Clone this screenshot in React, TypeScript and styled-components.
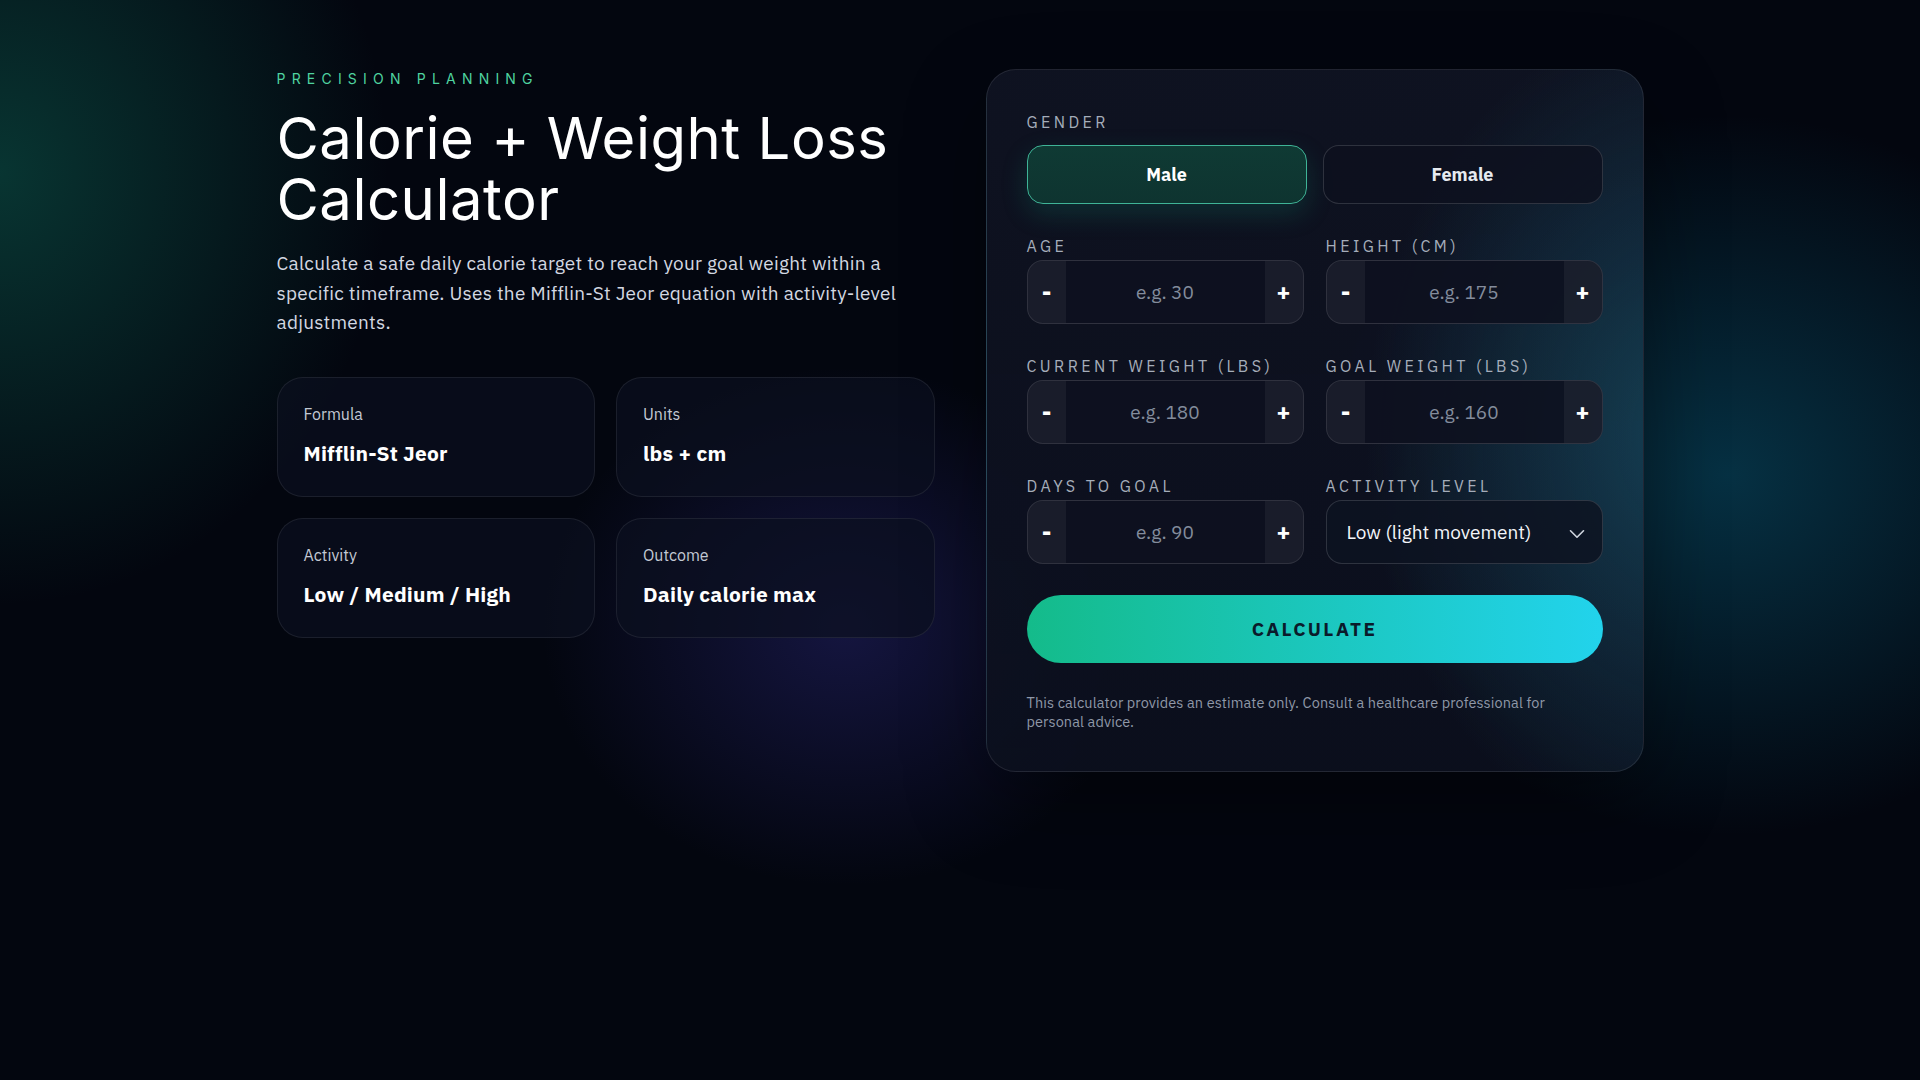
import React from 'react';
import styled, { createGlobalStyle } from 'styled-components';
import { ChevronDown } from 'lucide-react';

const GlobalStyle = createGlobalStyle`
  * { box-sizing: border-box; }
  html, body {
    margin: 0;
    min-height: 100%;
  }
  body {
    min-height: 1080px;
    font-family: 'IBM Plex Sans', Roboto, 'Noto Sans', sans-serif;
    color: #f3f5f9;
    background:
      radial-gradient(ellipse 540px 600px at 0% 16%, rgba(14, 110, 92, 0.45), rgba(14, 110, 92, 0) 72%),
      radial-gradient(ellipse 420px 360px at 44% 58%, rgba(52, 48, 150, 0.36), rgba(52, 48, 150, 0) 72%),
      radial-gradient(ellipse 560px 500px at 90% 44%, rgba(8, 84, 110, 0.55), rgba(8, 84, 110, 0) 72%),
      #03060f;
  }
`;

const Page = styled.main`
  display: grid;
  grid-template-columns: 658px 658px;
  gap: 51px;
  justify-content: center;
  align-items: start;
  padding-top: 69px;
`;

const Intro = styled.section`
  display: flex;
  flex-direction: column;
`;

const Eyebrow = styled.div`
  font-family: Inter, sans-serif;
  font-size: 14px;
  line-height: 18px;
  letter-spacing: 6.2px;
  color: #4fd3a0;
  margin-top: 1px;
  margin-bottom: 20px;
`;

const Title = styled.h1`
  font-family: Inter, sans-serif;
  font-weight: 400;
  font-size: 58px;
  line-height: 61px;
  letter-spacing: 0.5px;
  margin: 0 0 19px;
  color: #ffffff;
`;

const Lead = styled.p`
  font-size: 19px;
  line-height: 29.5px;
  letter-spacing: 0.25px;
  color: #d3d8e2;
  margin: 0 0 39px;
  max-width: 645px;
`;

const Facts = styled.div`
  display: grid;
  grid-template-columns: 1fr 1fr;
  gap: 21px;
`;

const FactCard = styled.div`
  height: 120px;
  padding: 26px 26px;
  border-radius: 26px;
  border: 1px solid rgba(255, 255, 255, 0.08);
  background: rgba(12, 16, 32, 0.7);
`;

const FactLabel = styled.div`
  font-size: 16px;
  line-height: 20px;
  color: #c3c9d4;
  margin-bottom: 16px;
`;

const FactValue = styled.div`
  font-size: 21px;
  line-height: 26px;
  font-weight: 700;
  letter-spacing: 0.2px;
  color: #ffffff;
`;

const Panel = styled.section`
  display: flex;
  flex-direction: column;
  padding: 43px 40px 40px;
  border-radius: 30px;
  border: 1px solid rgba(255, 255, 255, 0.09);
  background:
    radial-gradient(ellipse 440px 560px at 108% 52%, rgba(26, 92, 116, 0.62), rgba(26, 92, 116, 0) 75%),
    linear-gradient(180deg, rgba(15, 19, 34, 0.96), rgba(12, 16, 30, 0.9));
  box-shadow: 0 30px 80px rgba(0, 0, 0, 0.35);
`;

const Section = styled.div`
  margin-bottom: 33px;
`;

const FieldLabel = styled.div<{ $gap?: number }>`
  font-size: 16px;
  line-height: 18px;
  letter-spacing: 3.4px;
  text-transform: uppercase;
  color: #a5adba;
  margin-bottom: ${(p) => p.$gap ?? 5}px;
`;

const GenderRow = styled.div`
  display: grid;
  grid-template-columns: 1fr 1fr;
  gap: 16px;
`;

const GenderButton = styled.button<{ $active?: boolean }>`
  height: 59px;
  border-radius: 16px;
  font-family: inherit;
  font-size: 18px;
  font-weight: 700;
  color: ${(p) => (p.$active ? '#ffffff' : '#e6eaf0')};
  border: 1px solid ${(p) => (p.$active ? '#3fb497' : 'rgba(255, 255, 255, 0.14)')};
  background: ${(p) => (p.$active ? 'linear-gradient(180deg, #0f3a34, #0e3430)' : 'rgba(13, 17, 31, 0.85)')};
  box-shadow: ${(p) => (p.$active ? '0 10px 26px rgba(18, 150, 120, 0.22)' : 'none')};
  cursor: pointer;
`;

const FieldGrid = styled.div`
  display: grid;
  grid-template-columns: 1fr 1fr;
  column-gap: 22px;
  row-gap: 33px;
  margin-bottom: 31px;
`;

const Stepper = styled.div`
  display: grid;
  grid-template-columns: 38px 1fr 38px;
  height: 64px;
  border-radius: 16px;
  border: 1px solid rgba(255, 255, 255, 0.14);
  background: rgba(13, 17, 31, 0.9);
  overflow: hidden;
`;

const StepButton = styled.button`
  border: 0;
  padding: 0;
  background: rgba(255, 255, 255, 0.05);
  color: #ffffff;
  font-family: inherit;
  font-size: 24px;
  font-weight: 700;
  cursor: pointer;
`;

const NumberInput = styled.input`
  width: 100%;
  min-width: 0;
  border: 0;
  outline: none;
  background: transparent;
  text-align: center;
  font-family: inherit;
  font-size: 19px;
  color: #ffffff;
  &::placeholder {
    color: #838c9c;
  }
`;

const SelectBox = styled.button`
  display: flex;
  align-items: center;
  justify-content: space-between;
  width: 100%;
  height: 64px;
  padding: 0 12px 0 20px;
  border-radius: 16px;
  border: 1px solid rgba(255, 255, 255, 0.14);
  background: rgba(13, 19, 33, 0.85);
  color: #f4f6fa;
  font-family: inherit;
  font-size: 19px;
  cursor: pointer;
  svg {
    margin-top: 4px;
    color: #cfd5de;
  }
`;

const CalcButton = styled.button`
  height: 68px;
  border: 0;
  border-radius: 34px;
  background: linear-gradient(90deg, #14bb8a 0%, #1cc8c2 55%, #22d3ec 100%);
  color: #0a1b2b;
  font-family: inherit;
  font-size: 19px;
  font-weight: 700;
  letter-spacing: 0.12em;
  cursor: pointer;
  margin-bottom: 30px;
`;

const Disclaimer = styled.p`
  margin: 0;
  max-width: 545px;
  font-size: 14.5px;
  line-height: 19px;
  letter-spacing: 0.1px;
  color: #8f98a8;
`;

const facts = [
  { label: 'Formula', value: 'Mifflin-St Jeor' },
  { label: 'Units', value: 'lbs + cm' },
  { label: 'Activity', value: 'Low / Medium / High' },
  { label: 'Outcome', value: 'Daily calorie max' },
];

const fields = [
  { label: 'Age', placeholder: 'e.g. 30' },
  { label: 'Height (cm)', placeholder: 'e.g. 175' },
  { label: 'Current weight (lbs)', placeholder: 'e.g. 180' },
  { label: 'Goal weight (lbs)', placeholder: 'e.g. 160' },
  { label: 'Days to goal', placeholder: 'e.g. 90' },
];

const StepField = ({ label, placeholder }: { label: string; placeholder: string }) => (
  <div>
    <FieldLabel>{label}</FieldLabel>
    <Stepper>
      <StepButton type="button">-</StepButton>
      <NumberInput type="text" placeholder={placeholder} />
      <StepButton type="button">+</StepButton>
    </Stepper>
  </div>
);

const App = (): React.ReactElement => (
  <>
    <GlobalStyle />
    <Page>
      <Intro>
        <Eyebrow>PRECISION PLANNING</Eyebrow>
        <Title>
          Calorie + Weight Loss
          <br />
          Calculator
        </Title>
        <Lead>
          Calculate a safe daily calorie target to reach your goal weight within a specific timeframe.
          Uses the Mifflin-St Jeor equation with activity-level adjustments.
        </Lead>
        <Facts>
          {facts.map((f) => (
            <FactCard key={f.label}>
              <FactLabel>{f.label}</FactLabel>
              <FactValue>{f.value}</FactValue>
            </FactCard>
          ))}
        </Facts>
      </Intro>

      <Panel>
        <Section>
          <FieldLabel $gap={14}>Gender</FieldLabel>
          <GenderRow>
            <GenderButton type="button" $active>Male</GenderButton>
            <GenderButton type="button">Female</GenderButton>
          </GenderRow>
        </Section>
        <FieldGrid>
          {fields.map((f) => (
            <StepField key={f.label} label={f.label} placeholder={f.placeholder} />
          ))}
          <div>
            <FieldLabel>Activity level</FieldLabel>
            <SelectBox type="button">
              <span>Low (light movement)</span>
              <ChevronDown size={26} strokeWidth={1.5} />
            </SelectBox>
          </div>
        </FieldGrid>
        <CalcButton type="button">CALCULATE</CalcButton>
        <Disclaimer>
          This calculator provides an estimate only. Consult a healthcare professional for personal advice.
        </Disclaimer>
      </Panel>
    </Page>
  </>
);

export default App;
